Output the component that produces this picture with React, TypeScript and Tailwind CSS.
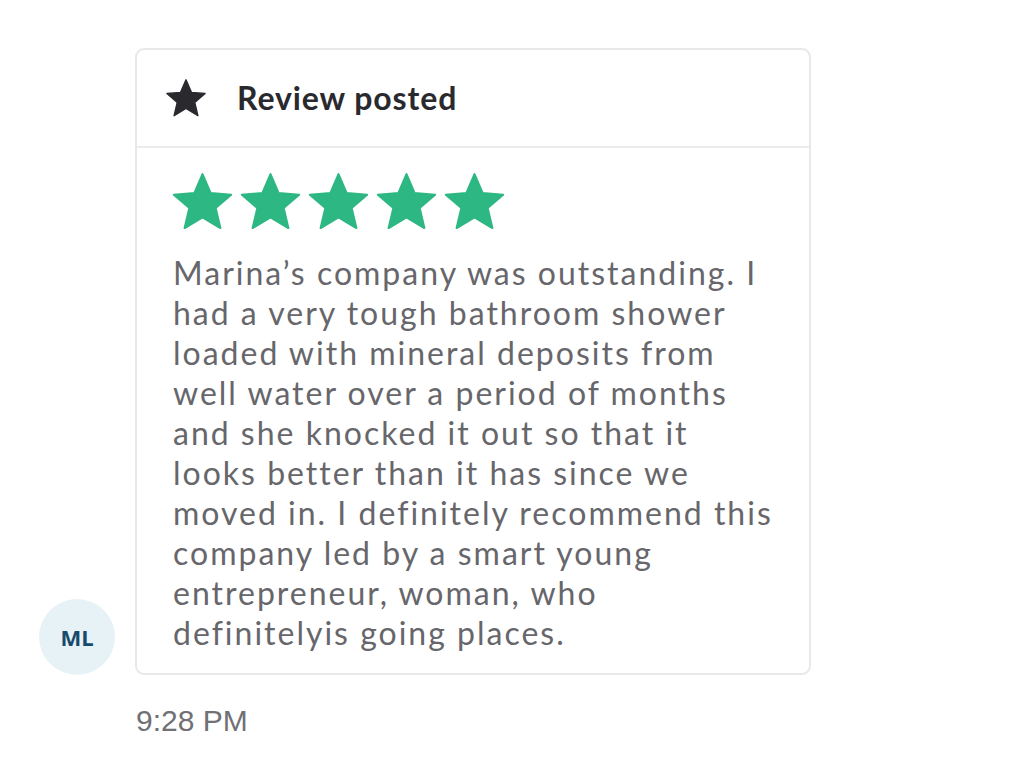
const lines = [
  "Marina\u2019s company was outstanding. I",
  "had a very tough bathroom shower",
  "loaded with mineral deposits from",
  "well water over a period of months",
  "and she knocked it out so that it",
  "looks better than it has since we",
  "moved in. I definitely recommend this",
  "company led by a smart young",
  "entrepreneur, woman, who",
  "definitelyis going places.",
]

function StarShape({ className }: { className: string }) {
  return (
    <svg viewBox="0 0 24 24" className={className}>
      <path
        d="M12 1.6l3.1 7.2 7.8.6-5.9 5.1 1.8 7.6L12 18l-6.8 4.1 1.8-7.6-5.9-5.1 7.8-.6z"
        fill="currentColor"
        stroke="currentColor"
        strokeWidth="0.8"
        strokeLinejoin="round"
      />
    </svg>
  )
}

export default function App() {
  return (
    <div className="min-h-screen bg-white pt-12 font-['Lato',sans-serif]">
      <div className="flex items-end">
        <div className="w-[135px] pl-[39px]">
          <div className="w-[76px] h-[76px] rounded-full bg-[#e7f2f7] flex items-center justify-center">
            <span className="text-[#174a6b] font-bold text-[22px] font-['Open_Sans',sans-serif]">ML</span>
          </div>
        </div>
        <div className="w-[676px] border-2 border-[#e8e8e8] rounded-[9px] bg-white">
          <div className="h-[98px] border-b-2 border-[#ececec] flex items-center pl-[28px] gap-[30px]">
            <StarShape className="w-[42px] h-[42px] text-[#2a2a2e]" />
            <h1 className="text-[#2a2a2e] font-bold text-[32px] tracking-[0.9px]">Review posted</h1>
          </div>
          <div className="pl-[36px] pr-[20px] pt-[22px] pb-[20px]">
            <div className="flex gap-[5px] ml-[-2px]">
              {[0, 1, 2, 3, 4].map((i) => (
                <StarShape key={i} className="w-[63px] h-[63px] text-[#2db783]" />
              ))}
            </div>
            <p className="mt-[20px] text-[#66666b] text-[32px] leading-[40px] tracking-[2px]">
              {lines.map((l) => (
                <span key={l} className="block whitespace-nowrap">
                  {l}
                </span>
              ))}
            </p>
          </div>
        </div>
      </div>
      <p className="ml-[136px] mt-[26px] text-[#707075] text-[30px] leading-[40px] font-['Liberation_Sans',sans-serif]">9:28 PM</p>
    </div>
  )
}
